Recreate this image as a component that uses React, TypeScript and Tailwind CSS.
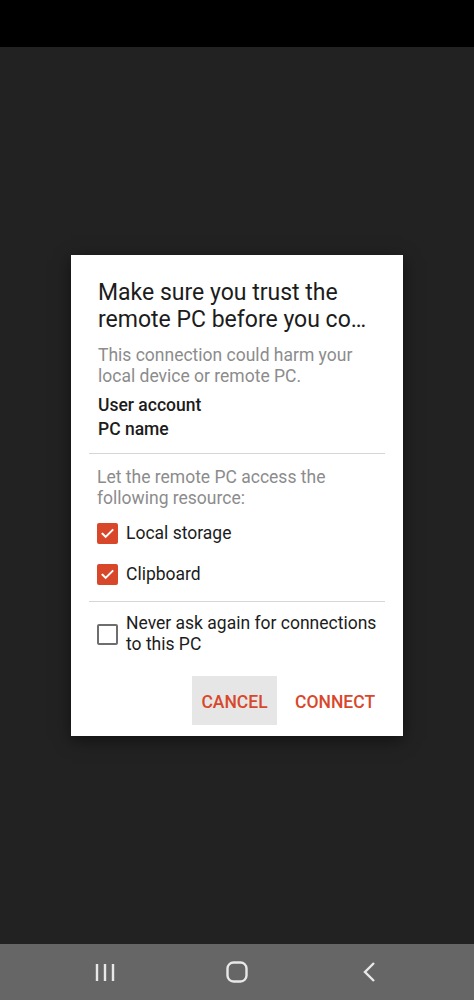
import React from 'react';

function Checkbox({ checked }: { checked: boolean }) {
  if (checked) {
    return (
      <span className="flex h-[21px] w-[21px] shrink-0 items-center justify-center rounded-[2px] bg-[#d9472b]">
        <svg width="15" height="15" viewBox="0 0 24 24" fill="none">
          <path d="M4 12.5l5 5L20 6.5" stroke="#ffffff" strokeWidth="3.2" strokeLinecap="square" />
        </svg>
      </span>
    );
  }
  return <span className="h-[21px] w-[21px] shrink-0 rounded-[2px] border-[2.5px] border-[#6e6e6e]" />;
}

export default function App() {
  return (
    <div className="flex h-[1000px] w-[474px] flex-col bg-[#222222] font-['Roboto',sans-serif]">
      <div className="h-[47px] bg-black" />
      <div className="flex flex-1 flex-col items-start pl-[71px] pt-[208px]">
        <div className="w-[332px] bg-white pb-[11px] pt-[24px] shadow-[0_4px_16px_rgba(0,0,0,0.5)]">
          <div className="px-[27px]">
            <h2 className="whitespace-nowrap text-[23px] leading-[27px] text-[#1c1c1c]">
              Make sure you trust the
              <br />
              remote PC before you co…
            </h2>
            <p className="mt-[12px] whitespace-nowrap text-[17.5px] leading-[21px] text-[#8c8c8c]">
              This connection could harm your
              <br />
              local device or remote PC.
            </p>
            <div className="mt-[6px] text-[17.5px] font-medium leading-[24px] text-[#1c1c1c]">
              <div>User account</div>
              <div>PC name</div>
            </div>
          </div>
          <div className="mx-[18px] mt-[12px] h-px bg-[#d6d6d6]" />
          <div className="px-[26px]">
            <p className="mt-[13px] whitespace-nowrap text-[17.5px] leading-[21px] text-[#8c8c8c]">
              Let the remote PC access the
              <br />
              following resource:
            </p>
            <div className="mt-[14px] flex flex-col gap-[20px] text-[17.5px] text-[#1c1c1c]">
              <label className="flex h-[21px] items-center gap-[8px]">
                <Checkbox checked />
                <span>Local storage</span>
              </label>
              <label className="flex h-[21px] items-center gap-[8px]">
                <Checkbox checked />
                <span>Clipboard</span>
              </label>
            </div>
          </div>
          <div className="mx-[18px] mt-[16px] h-px bg-[#d6d6d6]" />
          <div className="mt-[11px] flex items-center gap-[8px] px-[26px] text-[17.5px] leading-[21px] text-[#1c1c1c]">
            <Checkbox checked={false} />
            <span className="whitespace-nowrap">
              Never ask again for connections
              <br />
              to this PC
            </span>
          </div>
          <div className="mt-[21px] flex justify-end gap-[18px] pr-[28px]">
            <button className="h-[49px] w-[85px] bg-[#e6e6e6] pt-[3px] text-[17.5px] font-medium text-[#d9472b]">
              CANCEL
            </button>
            <button className="h-[49px] w-[80px] whitespace-nowrap pt-[3px] text-[17.5px] font-medium text-[#d9472b]">
              CONNECT
            </button>
          </div>
        </div>
      </div>
      <div className="grid h-[56px] grid-cols-3 items-center bg-[#666666] px-[39px]">
        <div className="flex justify-center">
          <svg width="22" height="20" viewBox="0 0 22 20">
            <path d="M3 2v17M11 2v17M19 2v17" stroke="#e8e8e8" strokeWidth="2.4" />
          </svg>
        </div>
        <div className="flex justify-center">
          <svg width="22" height="22" viewBox="0 0 22 22">
            <rect x="1.5" y="1.5" width="19" height="19" rx="6" stroke="#e8e8e8" strokeWidth="2.4" fill="none" />
          </svg>
        </div>
        <div className="flex justify-center">
          <svg width="14" height="22" viewBox="0 0 14 22">
            <path d="M12 2L3 11l9 9" stroke="#e8e8e8" strokeWidth="2.4" fill="none" />
          </svg>
        </div>
      </div>
    </div>
  );
}
